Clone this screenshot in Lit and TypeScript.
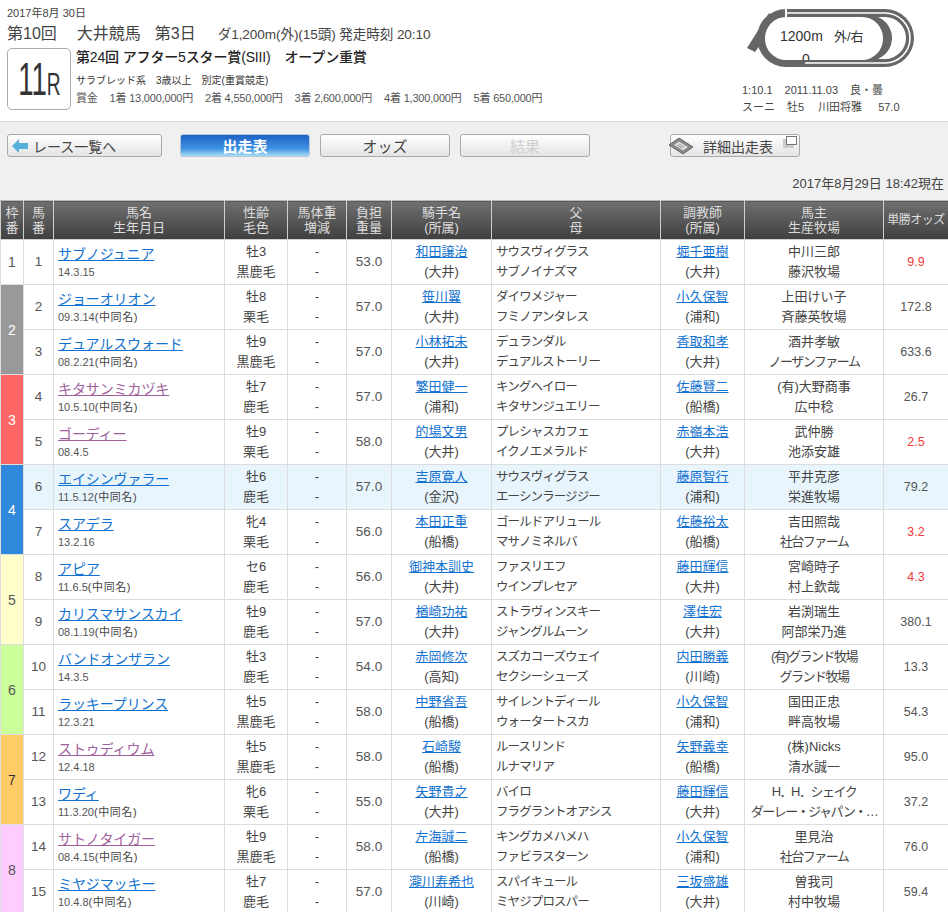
import { LitElement, html, css } from "lit";
import { customElement } from "lit/decorators.js";

type Row = {
  no: number;
  name: string;
  seen?: boolean;
  born: string;
  same?: boolean;
  sex: string;
  coat: string;
  load: string;
  jockey: string;
  jBase: string;
  sire: string;
  dam: string;
  trainer: string;
  tBase: string;
  owner: string;
  farm: string;
  odds: string;
  hot?: boolean;
  active?: boolean;
};

const FRAMES = [
  { n: 1, bg: "#ffffff", fg: "#555", rows: 1 },
  { n: 2, bg: "#999999", fg: "#fff", rows: 2 },
  { n: 3, bg: "#ff6666", fg: "#fff", rows: 2 },
  { n: 4, bg: "#3089dc", fg: "#fff", rows: 2 },
  { n: 5, bg: "#ffffcc", fg: "#555", rows: 2 },
  { n: 6, bg: "#ccff99", fg: "#555", rows: 2 },
  { n: 7, bg: "#ffcc66", fg: "#333", rows: 2 },
  { n: 8, bg: "#ffccff", fg: "#555", rows: 2 },
];

const ROWS: Row[] = [
  { no: 1, name: "サブノジュニア", born: "14.3.15", sex: "牡3", coat: "黒鹿毛", load: "53.0", jockey: "和田譲治", jBase: "大井", sire: "サウスヴィグラス", dam: "サブノイナズマ", trainer: "堀千亜樹", tBase: "大井", owner: "中川三郎", farm: "藤沢牧場", odds: "9.9", hot: true },
  { no: 2, name: "ジョーオリオン", born: "09.3.14", same: true, sex: "牡8", coat: "栗毛", load: "57.0", jockey: "笹川翼", jBase: "大井", sire: "ダイワメジャー", dam: "フミノアンタレス", trainer: "小久保智", tBase: "浦和", owner: "上田けい子", farm: "斉藤英牧場", odds: "172.8" },
  { no: 3, name: "デュアルスウォード", born: "08.2.21", same: true, sex: "牡9", coat: "黒鹿毛", load: "57.0", jockey: "小林拓未", jBase: "大井", sire: "デュランダル", dam: "デュアルストーリー", trainer: "香取和孝", tBase: "大井", owner: "酒井孝敏", farm: "ノーザンファーム", odds: "633.6" },
  { no: 4, name: "キタサンミカヅキ", seen: true, born: "10.5.10", same: true, sex: "牡7", coat: "鹿毛", load: "57.0", jockey: "繁田健一", jBase: "浦和", sire: "キングヘイロー", dam: "キタサンジュエリー", trainer: "佐藤賢二", tBase: "船橋", owner: "(有)大野商事", farm: "広中稔", odds: "26.7" },
  { no: 5, name: "ゴーディー", seen: true, born: "08.4.5", sex: "牡9", coat: "栗毛", load: "58.0", jockey: "的場文男", jBase: "大井", sire: "プレシャスカフェ", dam: "イクノエメラルド", trainer: "赤嶺本浩", tBase: "大井", owner: "武仲勝", farm: "池添安雄", odds: "2.5", hot: true },
  { no: 6, name: "エイシンヴァラー", born: "11.5.12", same: true, sex: "牡6", coat: "鹿毛", load: "57.0", jockey: "吉原寛人", jBase: "金沢", sire: "サウスヴィグラス", dam: "エーシンラージジー", trainer: "藤原智行", tBase: "浦和", owner: "平井克彦", farm: "栄進牧場", odds: "79.2", active: true },
  { no: 7, name: "スアデラ", born: "13.2.16", sex: "牝4", coat: "栗毛", load: "56.0", jockey: "本田正重", jBase: "船橋", sire: "ゴールドアリュール", dam: "マサノミネルバ", trainer: "佐藤裕太", tBase: "船橋", owner: "吉田照哉", farm: "社台ファーム", odds: "3.2", hot: true },
  { no: 8, name: "アピア", born: "11.6.5", same: true, sex: "セ6", coat: "鹿毛", load: "56.0", jockey: "御神本訓史", jBase: "大井", sire: "ファスリエフ", dam: "ウインプレセア", trainer: "藤田輝信", tBase: "大井", owner: "宮崎時子", farm: "村上欽哉", odds: "4.3", hot: true },
  { no: 9, name: "カリスマサンスカイ", born: "08.1.19", same: true, sex: "牡9", coat: "鹿毛", load: "57.0", jockey: "楢崎功祐", jBase: "大井", sire: "ストラヴィンスキー", dam: "ジャングルムーン", trainer: "澤佳宏", tBase: "大井", owner: "岩渕瑞生", farm: "阿部栄乃進", odds: "380.1" },
  { no: 10, name: "バンドオンザラン", born: "14.3.5", sex: "牡3", coat: "鹿毛", load: "54.0", jockey: "赤岡修次", jBase: "高知", sire: "スズカコーズウェイ", dam: "セクシーシューズ", trainer: "内田勝義", tBase: "川崎", owner: "(有)グランド牧場", farm: "グランド牧場", odds: "13.3" },
  { no: 11, name: "ラッキープリンス", born: "12.3.21", sex: "牡5", coat: "黒鹿毛", load: "58.0", jockey: "中野省吾", jBase: "船橋", sire: "サイレントディール", dam: "ウォータートスカ", trainer: "小久保智", tBase: "浦和", owner: "国田正忠", farm: "畔高牧場", odds: "54.3" },
  { no: 12, name: "ストゥディウム", seen: true, born: "12.4.18", sex: "牡5", coat: "黒鹿毛", load: "58.0", jockey: "石崎駿", jBase: "船橋", sire: "ルースリンド", dam: "ルナマリア", trainer: "矢野義幸", tBase: "船橋", owner: "(株)Nicks", farm: "清水誠一", odds: "95.0" },
  { no: 13, name: "ワディ", born: "11.3.20", same: true, sex: "牝6", coat: "栗毛", load: "55.0", jockey: "矢野貴之", jBase: "大井", sire: "バイロ", dam: "フラグラントオアシス", trainer: "藤田輝信", tBase: "大井", owner: "H．H．シェイク", farm: "ダーレー・ジャパン・…", odds: "37.2" },
  { no: 14, name: "サトノタイガー", seen: true, born: "08.4.15", same: true, sex: "牡9", coat: "黒鹿毛", load: "58.0", jockey: "左海誠二", jBase: "船橋", sire: "キングカメハメハ", dam: "ファビラスターン", trainer: "小久保智", tBase: "浦和", owner: "里見治", farm: "社台ファーム", odds: "76.0" },
  { no: 15, name: "ミヤジマッキー", born: "10.4.8", same: true, sex: "牡7", coat: "鹿毛", load: "57.0", jockey: "瀧川寿希也", jBase: "川崎", sire: "スパイキュール", dam: "ミヤジプロスパー", trainer: "三坂盛雄", tBase: "大井", owner: "曽我司", farm: "村中牧場", odds: "59.4" },
];

const COLS = [23, 30, 171, 63, 59, 45, 100, 169, 84, 139, 65];

// the reference font sets katakana narrower than Noto does
const kana = (s: string) =>
  /[\u30a0-\u30ff]{3,}/.test(s) ? html`<span class="kana">${s}</span>` : s;

@customElement("app-root")
export class AppRoot extends LitElement {
  static styles = css`
    :host {
      display: block;
      width: 948px;
      height: 912px;
      overflow: hidden;
      background: #f0f0f0;
      color: #444;
      font-family: "Liberation Sans", "Noto Sans CJK JP", sans-serif;
    }
    a {
      color: #0066cc;
      text-decoration: underline;
    }
    .head {
      height: 122px;
      box-sizing: border-box;
      background: #fff;
      border-bottom: 1px solid #dcdcdc;
      display: flex;
      justify-content: space-between;
      padding: 6px 33px 0 7px;
    }
    .date {
      font-size: 11px;
      line-height: 14px;
    }
    .meet {
      display: flex;
      align-items: baseline;
      gap: 14px;
      font-size: 16px;
      line-height: 24px;
      margin-top: 2px;
    }
    .meet .second {
      margin-left: 6px;
    }
    .meet .dist {
      font-size: 13.6px;
      margin-left: 8px;
      letter-spacing: -0.1px;
    }
    .race {
      display: flex;
      gap: 5px;
      margin-top: 1px;
    }
    .rno {
      width: 62px;
      height: 60px;
      margin-top: 0;
      border: 1px solid #aaa;
      border-radius: 5px;
      display: flex;
      align-items: center;
      justify-content: center;
      color: #333;
      background: #fff;
    }
    .rno span {
      display: inline-block;
      font-size: 46px;
      line-height: 1;
      white-space: nowrap;
      transform: scaleX(0.6);
    }
    .rno small {
      font-size: 32px;
    }
    .rinfo {
      display: flex;
      flex-direction: column;
      padding-top: 1px;
    }
    .title {
      font-size: 14px;
      line-height: 17px;
      color: #222;
      font-weight: 500;
      letter-spacing: -0.15px;
    }
    .cond {
      font-size: 10px;
      line-height: 14px;
      margin-top: 8px;
      color: #333;
    }
    .prize {
      font-size: 11px;
      line-height: 14px;
      margin-top: 3px;
      display: flex;
      gap: 12px;
      color: #555;
      letter-spacing: -0.2px;
    }
    .course {
      display: flex;
      flex-direction: column;
      width: 173px;
    }
    .course svg {
      display: block;
      margin: 2px 0 0 3px;
    }
    .record {
      font-size: 11px;
      line-height: 17px;
      margin-top: 12px;
      color: #444;
    }
    .record div {
      display: flex;
      gap: 12px;
      white-space: nowrap;
    }
    .record .wide {
      margin-left: 2px;
    }
    .record .wider {
      margin-left: 4px;
    }
    .nav {
      display: flex;
      align-items: center;
      padding: 12px 0 0 7px;
      height: 23px;
    }
    .btn {
      box-sizing: border-box;
      height: 23px;
      width: 130px;
      border: 1px solid #aaa;
      border-radius: 3px;
      background: linear-gradient(#ffffff, #e4e4e4);
      display: flex;
      align-items: center;
      justify-content: center;
      font-size: 15px;
      color: #444;
    }
    .btn.back {
      width: 155px;
      justify-content: flex-start;
      padding-left: 4px;
      gap: 5px;
      font-size: 14px;
      margin-right: 18px;
    }
    .btn.on {
      background: linear-gradient(#1e62c8, #3f93e2 65%, #a8dcf6);
      border-color: #b8c8d8;
      color: #fff;
      font-weight: 700;
      margin-right: 10px;
    }
    .btn.plain {
      margin-right: 10px;
    }
    .btn.off {
      color: #d0d0d0;
      margin-right: 80px;
    }
    .btn.detail {
      position: relative;
      font-size: 14px;
      justify-content: flex-start;
      padding-left: 32px;
    }
    .btn.detail .book {
      position: absolute;
      left: -3px;
      top: 2px;
    }
    .btn.detail .win {
      position: absolute;
      right: 1px;
      top: 1px;
    }
    .stamp {
      text-align: right;
      font-size: 13px;
      line-height: 16px;
      padding: 19px 4px 0 0;
      height: 24px;
    }
    table {
      border-collapse: collapse;
      table-layout: fixed;
      width: 948px;
    }
    th {
      background: linear-gradient(#707070, #3f3f3f);
      color: #dddddd;
      font-weight: 400;
      font-size: 13px;
      line-height: 15px;
      height: 38px;
      padding: 0;
      border: 1px solid #cfcfcf;
      border-top: 1px solid #bbb;
      white-space: nowrap;
      overflow: hidden;
    }
    th.odds {
      font-size: 12px;
      letter-spacing: -0.5px;
    }
    td {
      background: #fff;
      height: 44px;
      padding: 0;
      border: 1px solid #dddddd;
      text-align: center;
      font-size: 13px;
      line-height: 20px;
      white-space: nowrap;
      overflow: hidden;
    }
    tr.active td:not(.frame) {
      background: #e8f5fd;
    }
    td.frame {
      font-size: 14px;
    }
    td.left {
      text-align: left;
      padding-left: 4px;
    }
    td.num {
      color: #555;
      font-size: 13.5px;
    }
    .name {
      display: block;
      font-size: 14px;
      line-height: 18px;
      margin-top: 1px;
      letter-spacing: -0.1px;
    }
    .name a {
      color: #1272d0;
    }
    .name a.seen {
      color: #a0609c;
    }
    .born {
      display: block;
      font-size: 11px;
      line-height: 15px;
      margin-top: 2px;
      color: #555;
    }
    .born i {
      font-style: normal;
      letter-spacing: 0.6px;
      color: #444;
    }
    .link {
      color: #1272d0;
    }
    .sire {
      font-size: 12.5px;
      letter-spacing: -0.9px;
      padding-left: 4px;
    }
    .kana {
      letter-spacing: -1.5px;
    }
    td.oddsv {
      font-size: 12.5px;
      color: #555;
    }
    td.oddsv.hot {
      color: #f23a3a;
    }
  `;

  renderRows() {
    let start = 0;
    return FRAMES.map((f) => {
      const rows = ROWS.slice(start, start + f.rows);
      start += f.rows;
      return rows.map(
        (r, i) => html`<tr class=${r.active ? "active" : ""}>
          ${i === 0
            ? html`<td
                class="frame"
                rowspan=${f.rows}
                style="background:${f.bg};color:${f.fg}"
              >
                ${f.n}
              </td>`
            : null}
          <td class="num">${r.no}</td>
          <td class="left">
            <span class="name"
              ><a href="#" class=${r.seen ? "seen" : ""}>${r.name}</a></span
            >
            <span class="born"
              >${r.born}${r.same ? html`<i>(中同名)</i>` : ""}</span
            >
          </td>
          <td>${r.sex}<br />${r.coat}</td>
          <td>-<br />-</td>
          <td class="num">${r.load}</td>
          <td><a class="link" href="#">${r.jockey}</a><br />(${r.jBase})</td>
          <td class="left sire">${r.sire}<br />${r.dam}</td>
          <td><a class="link" href="#">${r.trainer}</a><br />(${r.tBase})</td>
          <td>${kana(r.owner)}<br />${kana(r.farm)}</td>
          <td class="oddsv ${r.hot ? "hot" : ""}">${r.odds}</td>
        </tr>`
      );
    });
  }

  render() {
    return html`
      <div class="head">
        <div>
          <div class="date">2017年8月 30日</div>
          <div class="meet">
            <span>第10回</span><span class="second">大井競馬</span
            ><span>第3日</span>
            <span class="dist">ダ1,200m(外)(15頭) 発走時刻 20:10</span>
          </div>
          <div class="race">
            <div class="rno"><span>11<small>R</small></span></div>
            <div class="rinfo">
              <div class="title">
                第24回 アフター5スター賞(SIII)&emsp;オープン重賞
              </div>
              <div class="cond">
                サラブレッド系&emsp;3歳以上&emsp;別定(重賞競走)
              </div>
              <div class="prize">
                <span>賞金</span><span>1着 13,000,000円</span
                ><span>2着 4,550,000円</span><span>3着 2,600,000円</span
                ><span>4着 1,300,000円</span><span>5着 650,000円</span>
              </div>
            </div>
          </div>
        </div>
        <div class="course">
          <svg width="172" height="62" viewBox="0 0 172 62">
            <defs>
              <clipPath id="infield">
                <rect x="20" y="9" width="118" height="43" rx="21" />
              </clipPath>
            </defs>
            <rect x="12" y="1" width="157" height="58" rx="29" fill="#666" />
            <path d="M2 40 L10 44 L30 16 L24 5 Z" fill="#666" />
            <path
              d="M42 5 H140 A25 25 0 0 1 140 55 H60"
              fill="none"
              stroke="#fff"
              stroke-width="1.6"
            />
            <path
              d="M133 9 H140 A21 21 0 0 1 140 51 H133 A22.75 22.75 0 0 0 133 9 Z"
              fill="#fff"
            />
            <rect x="40" y="0" width="2" height="10" fill="#fff" />
            <rect x="20" y="9" width="118" height="43" rx="21" fill="#fff" />
            <text
              x="35"
              y="33"
              font-size="14"
              fill="#333"
              font-family="Liberation Sans, Noto Sans CJK JP, sans-serif"
            >1200m</text>
            <text
              x="89"
              y="33"
              font-size="13"
              fill="#333"
              font-family="Liberation Sans, Noto Sans CJK JP, sans-serif"
            >外/右</text>
            <text
              x="57"
              y="56"
              font-size="14"
              fill="#333"
              font-family="Liberation Sans, sans-serif"
              clip-path="url(#infield)"
            >0</text>
          </svg>
          <div class="record">
            <div><span>1:10.1</span><span>2011.11.03</span><span>良・曇</span></div>
            <div>
              <span>スーニ</span><span>牡5</span
              ><span class="wide">川田将雅</span
              ><span class="wider">57.0</span>
            </div>
          </div>
        </div>
      </div>
      <div class="nav">
        <div class="btn back">
          <svg width="16" height="14" viewBox="0 0 16 14">
            <path d="M0 7 L7 0 V4 H16 V10 H7 V14 Z" fill="#55b0dc" />
          </svg>
          レース一覧へ
        </div>
        <div class="btn on">出走表</div>
        <div class="btn plain">オッズ</div>
        <div class="btn off">結果</div>
        <div class="btn detail">
          <svg class="book" width="26" height="18" viewBox="0 0 26 18">
            <path d="M1 8 L11 1 L25 10 L15 17 Z" fill="#888" stroke="#666" />
            <path d="M6 8 L11 4.5 L20 10 L15 13.5 Z" fill="#ddd" />
            <path d="M9 8 L14 11 M11 7 L16 10" stroke="#999" />
          </svg>
          詳細出走表
          <svg class="win" width="15" height="13" viewBox="0 0 15 13">
            <rect x="0" y="3" width="11" height="9" fill="#ccc" />
            <rect x="3.5" y="0.5" width="10" height="8" fill="#fff" stroke="#777" />
          </svg>
        </div>
      </div>
      <div class="stamp">2017年8月29日 18:42現在</div>
      <table>
        <colgroup>
          ${COLS.map((w) => html`<col style="width:${w}px" />`)}
        </colgroup>
        <thead>
          <tr>
            <th>枠<br />番</th>
            <th>馬<br />番</th>
            <th>馬名<br />生年月日</th>
            <th>性齢<br />毛色</th>
            <th>馬体重<br />増減</th>
            <th>負担<br />重量</th>
            <th>騎手名<br />(所属)</th>
            <th>父<br />母</th>
            <th>調教師<br />(所属)</th>
            <th>馬主<br />生産牧場</th>
            <th class="odds">単勝オッズ</th>
          </tr>
        </thead>
        <tbody>
          ${this.renderRows()}
        </tbody>
      </table>
    `;
  }
}
